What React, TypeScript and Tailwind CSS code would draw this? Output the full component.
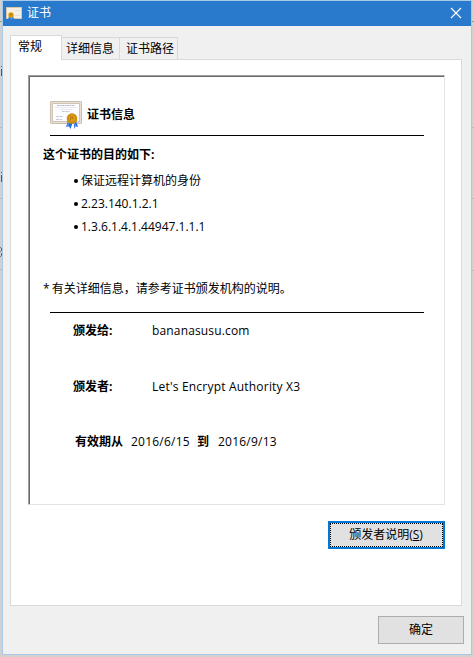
import React from "react";

function CertIcon({ small = false }: { small?: boolean }) {
  if (small) {
    return (
      <svg width="17" height="14" viewBox="0 0 17 14" className="mt-px block shrink-0">
        <rect x="0.5" y="0.5" width="15" height="11" fill="#f6f0e4" stroke="#d9c7a5" />
        <path d="M9 3.5h5M9 8.5h5" stroke="#e2dee0" strokeWidth="1" />
        <path d="M3 9l-1 4 2-1 1 1V9zM5 9l1 4 1-1h1L7 9z" fill="#2f7be0" />
        <circle cx="5" cy="8" r="2.7" fill="#d99a0e" />
        <circle cx="5" cy="7.6" r="1" fill="#b27406" />
      </svg>
    );
  }
  return (
    <svg width="32" height="29" viewBox="0 0 32 29" className="block shrink-0">
      <rect x="0.5" y="0.5" width="31" height="22" rx="0.8" fill="#ddd4c5" stroke="#d4cbbc" />
      <rect x="0.5" y="0.5" width="31" height="22" rx="0.8" fill="none" stroke="#b9ad9a" strokeDasharray="1 1.5" />
      <rect x="1.5" y="1.5" width="29" height="20" fill="none" stroke="#e6dfd2" />
      <rect x="2.5" y="2.5" width="27" height="18" fill="#fcfcfe" stroke="#cfc6b8" />
      <path d="M7 4.5h18" stroke="#b9bbd2" strokeDasharray="2 0.5" />
      <path d="M5 6.5h21M10 8.5h12" stroke="#e2e3ee" strokeWidth="0.8" />
      <path d="M12 10.5h8M6 15.5h7M6 18.5h6" stroke="#b9bbd2" strokeWidth="0.8" strokeDasharray="3 0.6" />
      <path d="M18 20l-2 6 3-.8 1.5 2.8 2-6zM23.5 21l1 7 1-2.8 2.5.8-2-6z" fill="#2668d8" />
      <path d="M19 21l-1.5 4M24.5 22l1.2 3" stroke="#6ca8f6" />
      <circle cx="22" cy="17.5" r="5.3" fill="#cf900c" />
      <circle cx="22" cy="17" r="3.6" fill="#e2a51d" stroke="#c58508" strokeWidth="0.8" />
      <path d="M20.5 19v-3.2h2.6v1.8h-1.6" fill="none" stroke="#a46b08" strokeWidth="0.8" />
    </svg>
  );
}

const purposes = [
  { text: "保证远程计算机的身份", spacing: "" },
  { text: "2.23.140.1.2.1", spacing: "" },
  { text: "1.3.6.1.4.1.44947.1.1.1", spacing: "" },
];

function TitleBar() {
  return (
    <header className="flex h-[25px] items-center bg-[#2979cc] pl-[3px] pr-[9px] text-white">
      <CertIcon small />
      <h1 className="ml-1 mb-px text-[12px] leading-[22px]">证书</h1>
      <svg width="12" height="12" viewBox="0 0 12 12" className="mb-px ml-auto">
        <path d="M1 1l10 10M11 1L1 11" stroke="#fff" strokeWidth="1.2" />
      </svg>
    </header>
  );
}

function Tabs() {
  return (
    <nav className="relative z-10 -mb-px flex h-[25px] items-end leading-[22px]">
      <button className="h-[25px] w-[52px] border border-b-0 border-[#d9d9d9] bg-white pb-[3px] pl-[7px] text-left leading-[21px]">常规</button>
      <button className="-ml-px mb-px h-[22px] w-[59px] border border-b-0 border-[#d9d9d9] bg-[#f0f0f0] pl-[4px] text-left">详细信息</button>
      <button className="-ml-px mb-px h-[22px] w-[59px] border border-b-0 border-[#d9d9d9] bg-[#f0f0f0] pl-[6px] text-left">证书路径</button>
    </nav>
  );
}

function CertificateInfo() {
  return (
    <section className="h-[430px] w-[417px] border border-b-[#e3e3e3] border-l-[#a0a0a0] border-r-[#e3e3e3] border-t-[#a0a0a0]">
      <div className="h-full border-l border-t border-[#696969]">
        <div className="mx-5 flex h-[59px] border-b border-black pt-6">
          <CertIcon />
          <h2 className="ml-[5px] mt-[5px] font-bold leading-[18px]">证书信息</h2>
        </div>
        <h3 className="ml-[13px] mt-[10px] font-bold leading-[18px]">这个证书的目的如下:</h3>
        <ul className="ml-[43px] mt-[5px]">
          {purposes.map((p) => (
            <li key={p.text} className="flex h-[23px] items-center">
              <span className="ml-px mr-[3px] size-1 rounded-full bg-black" />
              <span className={p.spacing}>{p.text}</span>
            </li>
          ))}
        </ul>
        <p className="ml-[13px] mt-[42px] leading-[18px]"><span className="mr-[-1px]">* </span>有关详细信息，请参考证书颁发机构的说明。</p>
        <div className="mx-5 mt-[14px] h-px bg-black" />
        <dl className="ml-[43px] mt-[9px] grid grid-cols-[79px_auto] gap-y-[38px] leading-[18px]">
          <dt className="font-bold">颁发给:</dt>
          <dd className="tracking-[0.15px]">bananasusu.com</dd>
          <dt className="font-bold">颁发者:</dt>
          <dd className="tracking-[0.2px]">Let's Encrypt Authority X3</dd>
        </dl>
        <div className="ml-[45px] mt-[37px] flex leading-[18px]">
          <b className="w-[56px]">有效期从</b>
          <span className="w-[66px] tracking-[0.22px]">2016/6/15</span>
          <b className="w-[21px]">到</b>
          <span className="tracking-[0.22px]">2016/9/13</span>
        </div>
      </div>
    </section>
  );
}

export default function App() {
  return (
    <div className="flex h-[657px] w-[474px] overflow-hidden bg-[#d2d1ce] font-['Open_Sans','Noto_Sans_CJK_SC',sans-serif] text-[12px] text-black">
      <div className="flex h-[655px] w-[2px] shrink-0 flex-col">
        <div className="mt-[21px] h-px bg-[#83ad7b]" />
        <div className="ml-px mt-[44px] h-px bg-[#666]" />
        <div className="ml-px mt-[2px] h-[7px] bg-[#555]" />
        <div className="mt-[51px] h-px bg-[#bbb]" />
        <div className="ml-px mt-[44px] h-px bg-[#666]" />
        <div className="ml-px mt-[2px] h-[7px] bg-[#555]" />
        <div className="mt-[16px] h-px bg-[#bbb]" />
        <div className="mt-[48px] h-px w-px bg-[#777]" />
        <div className="ml-px h-[3px] bg-[#666]" />
        <div className="h-px w-px bg-[#777]" />
        <div className="ml-px mt-px h-[3px] bg-[#666]" />
        <div className="h-px w-px bg-[#777]" />
        <div className="mt-[12px] h-px bg-[#bbb]" />
      </div>
      <main className="h-[655px] w-[470px] shrink-0 border border-[#a8c9e9] bg-[#f0f0f0]">
        <TitleBar />
        <div className="px-[7px] pt-[9px]">
          <Tabs />
          <section className="flex h-[547px] w-[452px] flex-col items-start border border-[#d9d9d9] bg-white pl-[17px] pt-[15px]">
            <CertificateInfo />
            <button className="ml-[300px] mt-4 h-[28px] w-[117px] border-2 border-[#0078d7] bg-[#e1e1e1]">
              <span className="flex h-full items-center justify-center border border-dotted border-black pr-px">颁发者说明(<u>S</u>)</span>
            </button>
          </section>
          <button className="ml-[368px] mt-[10px] block h-[28px] w-[86px] border border-[#adadad] bg-[#e1e1e1]">确定</button>
        </div>
      </main>
      <div className="w-[2px] shrink-0 pt-[21px]">
        <div className="h-px bg-[#83ad7b]" />
        <div className="mt-[105px] h-px bg-[#bbb]" />
        <div className="mt-[70px] h-px bg-[#bbb]" />
        <div className="mt-[71px] h-px bg-[#bbb]" />
      </div>
    </div>
  );
}
